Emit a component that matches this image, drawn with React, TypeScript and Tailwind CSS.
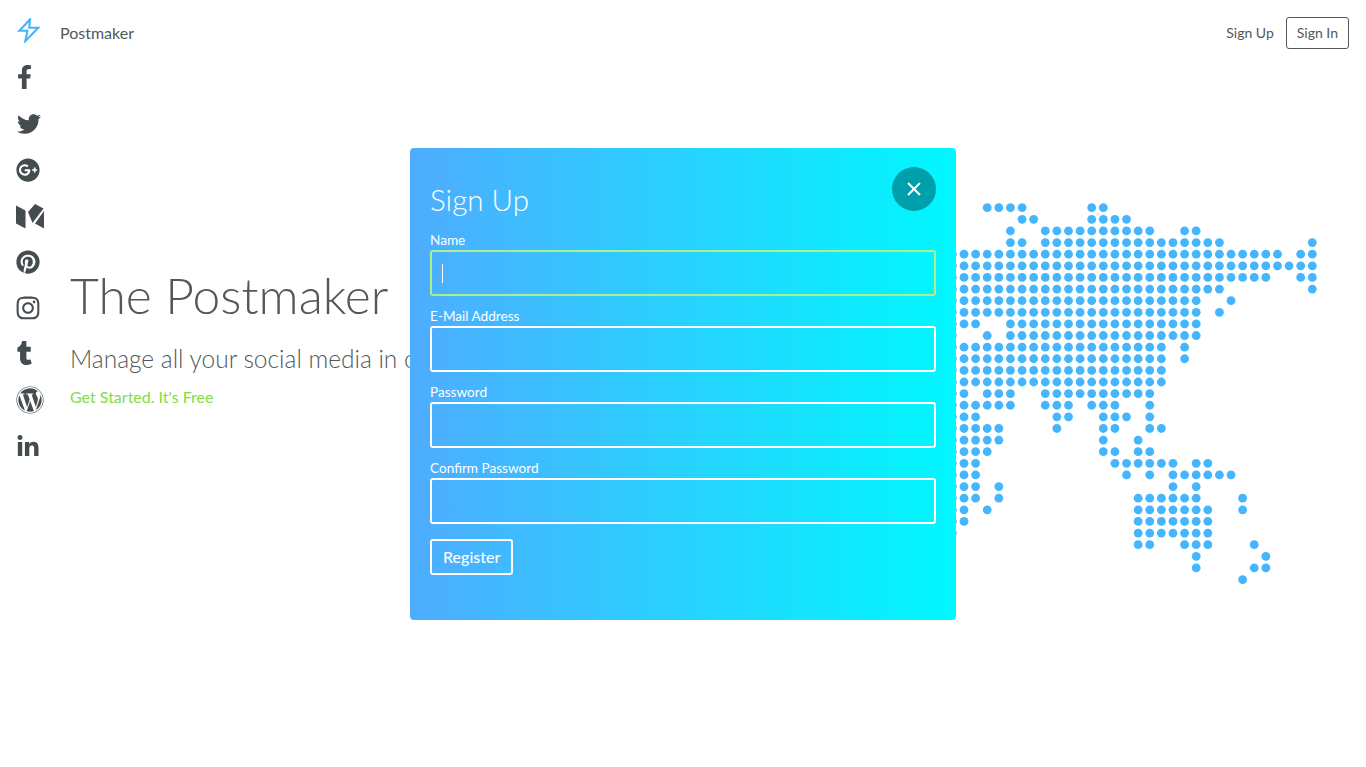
import {
  FaFacebookF,
  FaGooglePlus,
  FaInstagram,
  FaLinkedinIn,
  FaPinterest,
  FaTumblr,
  FaTwitter,
  FaWordpress,
} from "react-icons/fa";

const font = { fontFamily: '"Lato", "Open Sans", sans-serif' };

// one entry per map row, columns as "from-to" ranges
const mapRows = [
  "2-5 11-12",
  "5-6 11-14",
  "4 7-16 19-20",
  "4-5 7-22 30",
  "-1-27 29-30",
  "-1-30",
  "-1-26 29-30",
  "-1-22 30",
  "-1-20 23",
  "-1-20 22",
  "-1-1 4-20",
  "-1 2 4-20",
  "-1-17 19",
  "-1-17 19",
  "-1-17",
  "-1-17",
  "-1-0 2-4 7-16",
  "-1-4 7-9 11-13 16",
  "-1-1 8-9 12-14 16",
  "-1-3 8 12-13 16-17",
  "-1-3 12 15",
  "-1-2 12-13 15-16",
  "-1-1 13-18 20-21",
  "-1-1 14 16 18-23",
  "-1-1 3 18 20",
  "-1-1 3 15-20 24",
  "-1-0 2 15-21 24",
  "-1-0 15-21",
  "-1 15-21",
  "15-16 19-21 25",
  "20 26",
  "20 25-26",
  "24",
];

function parseRow(row: string) {
  const cols: number[] = [];
  for (const part of row.split(" ")) {
    const match = part.match(/^(-?\d+)(?:-(-?\d+))?$/);
    if (!match) continue;
    const from = Number(match[1]);
    const to = match[2] ? Number(match[2]) : from;
    for (let c = from; c <= to; c++) cols.push(c);
  }
  return cols;
}

function DotMap() {
  return (
    <svg width="372" height="392" viewBox="948 200 372 392" className="shrink-0">
      {mapRows.map((row, r) =>
        parseRow(row).map((c) => (
          <circle key={`${r}-${c}`} cx={964 + c * 11.61} cy={207.7 + r * 11.62} r="4.4" fill="#45b6fd" />
        )),
      )}
    </svg>
  );
}

function BoltLogo() {
  return (
    <svg width="24" height="25" viewBox="0 0 26 26" fill="none" stroke="#4db2f5" strokeWidth="2.3">
      <path d="M14 1 L2.5 13.3 H11.3 L9 24.5 L23 10 H13.3 Z" />
    </svg>
  );
}

function MediumLogo() {
  return (
    <svg width="28" height="25" viewBox="0 0 28 25" fill="currentColor">
      <polygon points="0,1.5 9.5,6.5 9.5,24.5 0,19.5" />
      <polygon points="12,8 19,0 27.5,4.5 16.5,19" />
      <polygon points="28,7 28,24.5 19,19.5" />
    </svg>
  );
}

function Field({ label, focused }: { label: string; focused?: boolean }) {
  return (
    <label className="block">
      <span className="block h-5 text-[13.6px] leading-5 font-normal text-white">{label}</span>
      <span className="relative mb-[10px] block">
        <input
          className={`block h-[46px] w-full rounded-[3px] border-2 bg-transparent px-3 text-white outline-none ${
            focused ? "border-[#a9f08e]" : "border-white"
          }`}
        />
        {focused && <span className="absolute top-[14px] left-3 h-[19px] w-px bg-white" />}
      </span>
    </label>
  );
}

export default function App() {
  return (
    <div className="relative flex h-[767px] w-full overflow-hidden bg-white text-[#53585b]" style={font}>
      <aside className="flex w-[60px] shrink-0 flex-col pt-[18px] text-[#454c50]">
        <div className="ml-[17px] h-[46px]">
          <BoltLogo />
        </div>
        <div className="flex h-[46px] items-start pl-[17px]"><FaFacebookF className="h-[26px] w-[15px]" /></div>
        <div className="flex h-[46px] items-start pt-[2px] pl-[16px]"><FaTwitter className="h-[24px] w-[26px]" /></div>
        <div className="flex h-[46px] items-start pl-[16px] pt-[2px]"><FaGooglePlus className="h-6 w-6" /></div>
        <div className="flex h-[46px] items-start pl-[16px] pt-[2px]"><MediumLogo /></div>
        <div className="flex h-[46px] items-start pl-[16px] pt-[2px]"><FaPinterest className="h-6 w-6" /></div>
        <div className="flex h-[46px] items-start pl-[16px] pt-[1px]"><FaInstagram className="h-[26px] w-6" /></div>
        <div className="flex h-[46px] items-start pl-[17px]"><FaTumblr className="h-[26px] w-[15px]" /></div>
        <div className="flex h-[46px] items-start pl-[16px]"><FaWordpress className="h-7 w-7" /></div>
        <div className="flex h-[46px] items-start pl-[16px] pt-[3px]"><FaLinkedinIn className="h-6 w-6" /></div>
      </aside>

      <main className="min-w-0 flex-1">
        <nav className="flex h-[66px] items-start justify-between pt-[17px] pr-[17px]">
          <span className="mt-1 text-[16px] leading-6">Postmaker</span>
          <div className="flex items-center gap-3 text-sm">
            <a>Sign Up</a>
            <a className="flex h-8 items-center rounded-[3px] border border-[#53585b] px-[10px]">Sign In</a>
          </div>
        </nav>

        <section className="flex items-start justify-between pr-[46px] pl-[10px]">
          <div className="pt-[199px] whitespace-nowrap">
            <h1 className="text-[49.8px] leading-[60px] font-light">The Postmaker</h1>
            <p className="mt-[19px] text-[24.5px] leading-[30px] font-light">Manage all your social media in one place</p>
            <a className="mt-[11px] block text-base leading-6 text-[#84dc48]">Get Started. It's Free</a>
          </div>
          <div className="mt-[134px]">
            <DotMap />
          </div>
        </section>
      </main>

      <div className="absolute inset-0 flex items-start justify-center pt-[148px]">
        <div className="relative h-[472px] w-[546px] rounded bg-[linear-gradient(to_right,#4facfe,#00f8ff)] px-5 pt-[34px]">
          <button className="absolute top-[19px] right-5 flex h-11 w-11 items-center justify-center rounded-full bg-[#009fac]">
            <svg width="14" height="14" viewBox="0 0 14 14" stroke="white" strokeWidth="2">
              <path d="M1 1 L13 13 M13 1 L1 13" />
            </svg>
          </button>
          <h2 className="mb-[12px] text-[29.6px] leading-9 font-light text-white">Sign Up</h2>
          <Field label="Name" focused />
          <Field label="E-Mail Address" />
          <Field label="Password" />
          <Field label="Confirm Password" />
          <button className="mt-[5px] h-9 rounded-[3px] border-2 border-white px-[11px] text-base font-medium text-white">
            Register
          </button>
        </div>
      </div>
    </div>
  );
}
